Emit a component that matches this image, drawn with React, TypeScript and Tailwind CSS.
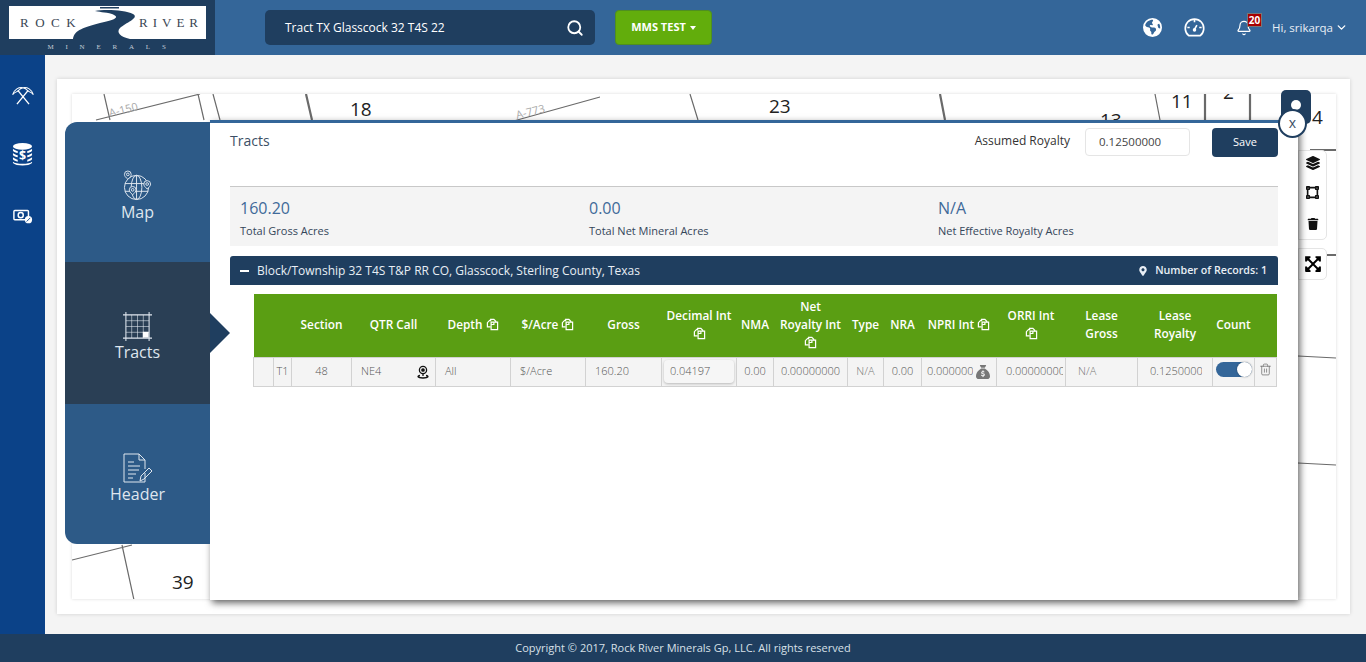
import { Bell, ChevronDown, Search, Trash2 } from "lucide-react";
import { FaExpandArrowsAlt, FaLayerGroup, FaMapMarkerAlt, FaTrash, FaVectorSquare } from "react-icons/fa";
import { FaEarthAmericas, FaSackDollar } from "react-icons/fa6";

const font = "font-['Open_Sans',sans-serif]";

const CopyIcon = () => (
  <svg viewBox="0 0 14 14" className="inline-block h-[13px] w-[13px] align-[-2px]" fill="none" stroke="currentColor" strokeWidth="1.3">
    <path d="M5 3.5V1.5h3.5l2 2v1M5 9.5H1.5V5L4 2.5H5" />
    <path d="M5.5 4.5H9l3.5 0V12.5H5.5Z" />
    <path d="M8.5 4.5v2.5H5.5" />
  </svg>
);

const Logo = () => (
  <div className="relative flex h-[55px] w-[215px] shrink-0 flex-col items-center bg-[#1f3e5f]">
    <div className="mt-[6px] flex h-[33px] w-[197px] items-center justify-between bg-white pl-[11px] pr-[3px] font-['Liberation_Serif',serif] text-[13px] tracking-[6.5px] text-[#3a4654]">
      <span>ROCK</span>
      <span className="tracking-[5px]">RIVER</span>
    </div>
    <svg viewBox="70 0 70 42" className="absolute left-[70px] top-0 h-[42px] w-[70px]" fill="#1f3e5f">
      <path d="M73 39C74 30 85 27 100 23 112 20 122 18 112 14 105 12 98 12 95 11 105 9 125 10 133 14 140 18 125 23 120 28 116 32 120 37 130 39Z" />
      <path d="M100 7h19v1.5h-19z" />
    </svg>
    <div className="mt-[3px] pl-[10px] font-['Liberation_Serif',serif] text-[7px] leading-[10px] tracking-[11.8px] text-[#c4ccd6]">MINERALS</div>
  </div>
);

const GaugeIcon = () => (
  <svg viewBox="0 0 22 22" className="ml-[22px] h-[21px] w-[21px]" fill="none" stroke="currentColor" strokeWidth="1.7">
    <path d="M5 19.5A9.7 9.7 0 1 1 17 19.5Z" />
    <path d="M11 3v2.5M3.5 11H6M18.5 11H16M11 13l2.5-4.5" />
    <circle cx="11" cy="13.5" r="1" fill="currentColor" />
  </svg>
);

const TopBar = () => (
  <header className="flex h-[55px] shrink-0 items-center bg-[#346699] shadow-[0_1px_3px_rgba(0,0,0,0.2)]">
    <Logo />
    <div className="ml-[50px] flex h-[35px] w-[330px] items-center justify-between rounded-[5px] bg-[#1f3e5f] pl-[20px] pr-[11px] text-[12px] text-white">
      <span>Tract TX Glasscock 32 T4S 22</span>
      <Search size={18} strokeWidth={2.4} />
    </div>
    <button className="ml-[20px] flex h-[35px] w-[97px] items-center justify-center rounded-[4px] border border-[#4f8f20] bg-[#62ad0c] text-[11px] font-bold text-white">
      MMS TEST
      <span className="ml-[4px] h-0 w-0 border-x-[3.5px] border-t-[4px] border-x-transparent border-t-white" />
    </button>
    <div className="ml-auto flex items-center text-white">
      <FaEarthAmericas size={19} />
      <GaugeIcon />
      <div className="relative ml-[31px]">
        <Bell size={16} strokeWidth={1.8} />
        <span className="absolute -right-[10px] -top-[7px] flex h-[14px] w-[15px] items-center justify-center border border-[#777] bg-[#a80000] text-[10px] font-bold leading-none">20</span>
      </div>
      <span className="ml-[20px] text-[11.5px] text-[#e8eef5]">Hi, srikarqa</span>
      <ChevronDown size={13} strokeWidth={2.5} className="ml-[2px] mr-[18px]" />
    </div>
  </header>
);

const Sidebar = () => (
  <aside className="flex w-[45px] shrink-0 flex-col items-center bg-[#0b4288] pt-[31px] text-white">
    <svg viewBox="0 0 26 22" className="h-[19px] w-[24px]" fill="none" stroke="currentColor" strokeWidth="1.6">
      <path d="M7 5 20 21M19 5 6 21" />
      <path d="M1 10C3 4 8 1 13 2 9 3 8 5 7 6L3 8ZM25 10C23 4 18 1 13 2 17 3 18 5 19 6L23 8Z" strokeWidth="1.2" />
    </svg>
    <svg viewBox="0 0 22 24" className="mt-[38px] h-[23px] w-[21px]" fill="currentColor">
      <ellipse cx="11" cy="3.5" rx="10" ry="3.5" />
      <path d="M1 6c1 1 3 2 5 2.400V10.500c-2-.3-4-1-5-2.500ZM21 6c-1 1-3 2-5 2.400V10.500c2-.3 4-1 5-2.500ZM1 10.500c1 1 3 2 5 2.400V15c-2-.3-4-1-5-2.500ZM21 10.500c-1 1-3 2-5 2.400V15c2-.3 4-1 5-2.500ZM1 15c1 1 3 2 5 2.400V19.500c-2-.3-4-1-5-2.500ZM21 15c-1 1-3 2-5 2.400V19.500c2-.3 4-1 5-2.500ZM1 19.500c3 3 17 3 20 0V21c-3 3.500-17 3.500-20 0Z" />
      <text x="11" y="17.500" textAnchor="middle" fontSize="13" fontWeight="700" fontFamily="Open Sans, sans-serif">$</text>
    </svg>
    <svg viewBox="0 0 22 16" className="mt-[43px] h-[15px] w-[20px]" fill="none" stroke="currentColor" strokeWidth="1.6">
      <rect x="1" y="1.500" width="16" height="10" rx="1" />
      <circle cx="8.500" cy="6.500" r="2.800" />
      <circle cx="17" cy="11.500" r="4" fill="currentColor" stroke="none" />
      <path d="M15 13.500l4-4" stroke="#0b4288" strokeWidth="1" />
    </svg>
  </aside>
);

const MapCanvas = () => (
  <svg viewBox="72 94 1264 505" className="absolute inset-0 h-full w-full bg-white" fill="none" stroke="#6a6a6a" strokeWidth="1.2">
    <path d="M96 120 200 94M104 94 110 120M198 94 204 120M213 94 220 120M510 122 600 97M690 94 698 120M1155 94 1160 120" />
    <path d="M306 94 312 120M940 94 945 120M1205 94V120M1250 94V120M1310 150H1336M1327 255H1336" strokeWidth="2.2" />
    <path d="M72 560 132 545M122 545 134 600M1298 356 1336 358M1298 463 1336 465" />
    <g fill="#222" stroke="none" fontFamily="Open Sans, sans-serif" fontSize="19">
      <text x="350" y="116">18</text>
      <text x="769" y="113">23</text>
      <text x="1171" y="108">11</text>
      <text x="1223" y="99">2</text>
      <text x="1100" y="127">13</text>
      <text x="1312" y="124">4</text>
      <text x="172" y="589">39</text>
    </g>
    <g fill="#aaa" stroke="none" fontFamily="Open Sans, sans-serif" fontSize="11">
      <text x="110" y="117" transform="rotate(-14 110 117)">A-150</text>
      <text x="517" y="119" transform="rotate(-14 517 119)">A-773</text>
    </g>
  </svg>
);

const MapTools = () => (
  <>
    <div className="absolute left-[1224px] top-[11px] flex h-[34px] w-[30px] justify-center rounded-[5px] bg-[#1f3e5f] pt-[10px]">
      <span className="h-[10px] w-[10px] rounded-full bg-white" />
    </div>
    <div className="absolute left-[1241px] top-[71px] h-[90px] w-[29px] rounded-r-[5px] border border-[#e5e5e5] bg-white">
      <div className="flex h-[23px] items-center justify-center text-[#111]"><FaLayerGroup size={14} /></div>
      <div className="flex h-[37px] items-center justify-center text-[#111]"><FaVectorSquare size={13} /></div>
      <div className="flex h-[26px] items-center justify-center text-[#111]"><FaTrash size={12} /></div>
    </div>
    <div className="absolute left-[1241px] top-[169px] flex h-[32px] w-[29px] items-center justify-center rounded-r-[5px] border border-[#e5e5e5] bg-white text-black">
      <FaExpandArrowsAlt size={18} />
    </div>
  </>
);

const SideTab = ({ label, active, icon, h }: { label: string; active?: boolean; icon: React.ReactNode; h: string }) => (
  <div className={`relative flex flex-col items-center justify-center pt-[9px] text-[#dfe6ee] ${h} ${active ? "bg-[#2a3f55]" : ""}`}>
    {icon}
    <span className="text-[16px] leading-[22px]">{label}</span>
    {active && (
      <span className="absolute -right-[20px] top-[51px] h-0 w-0 border-y-[20px] border-l-[20px] border-y-transparent border-l-[#1f3e5f]" />
    )}
  </div>
);

const Pin = ({ x, y }: { x: number; y: number }) => (
  <g transform={`translate(${x} ${y})`}>
    <path d="M0 4.500C-2.500 2.500-3.500 1-3.500-.5a3.500 3.500 0 0 1 7 0C3.500 1 2.500 2.500 0 4.500Z" fill="#2d5a87" />
    <circle cy="-.5" r="1.400" />
  </g>
);

const GlobeIcon = () => (
  <svg viewBox="0 0 30 32" className="h-[31px] w-[29px]" fill="none" stroke="currentColor" strokeWidth="1">
    <circle cx="14" cy="18" r="12.500" />
    <ellipse cx="14" cy="18" rx="5.500" ry="12.500" />
    <path d="M2 14h24M2 22h24M14 5.500V30" />
    <Pin x={5} y={5} />
    <Pin x={25} y={15} />
    <Pin x={10} y={21} />
  </svg>
);

const GridIcon = () => (
  <svg viewBox="0 0 30 30" className="h-[29px] w-[29px]" fill="none" stroke="currentColor" strokeWidth="0.6">
    <path d="M0 3h30M0 27h30M3 0v30M27 0v30" strokeWidth="1.1" />
    <path d="M9 3v24M15 3v24M21 3v24M3 9h24M3 15h24M3 21h24" />
    <rect x="20.500" y="20.500" width="6" height="6" fill="#fff" stroke="none" />
  </svg>
);

const HeaderIcon = () => (
  <svg viewBox="0 0 30 30" className="h-[30px] w-[30px]" fill="none" stroke="currentColor" strokeWidth="1">
    <path d="M22 20v9H1V1h15l6 6v9M16 1v6h6" />
    <path d="M5 9h6M5 13h12M5 17h11M5 21h8M5 25h5" />
    <path d="M17 28l1-5 8-8 3 3-8 8Z" />
  </svg>
);

const StatBox = ({ value, label, w }: { value: string; label: string; w: string }) => (
  <div className={w}>
    <div className="text-[16px] leading-[22px] text-[#3f6a99]">{value}</div>
    <div className="mt-[5px] text-[11px] leading-[14px] text-[#34465a]">{label}</div>
  </div>
);

const widths = [20, 18, 60, 84, 75, 75, 76, 75, 37, 74, 36, 38, 75, 69, 72, 75, 42, 22];

const Th = ({ children }: { children?: React.ReactNode }) => (
  <th className="px-0 pb-[2px] text-center align-middle text-[11.8px] font-semibold leading-[18px] text-white">
    {children}
  </th>
);

const Td = ({ children, cls = "" }: { children?: React.ReactNode; cls?: string }) => (
  <td className={`overflow-hidden whitespace-nowrap border border-[#d2d2d2] text-[11px] font-light text-[#555] ${cls}`}>{children}</td>
);

const TractTable = () => (
  <table className="ml-[43px] table-fixed border-collapse" style={{ width: 1023 }}>
    <colgroup>
      {widths.map((w, i) => (
        <col key={i} style={{ width: w }} />
      ))}
    </colgroup>
    <thead>
      <tr className="h-[63px] bg-[#5a9e13]">
        <Th />
        <Th />
        <Th>Section</Th>
        <Th>QTR Call</Th>
        <Th>Depth <CopyIcon /></Th>
        <Th>$/Acre <CopyIcon /></Th>
        <Th>Gross</Th>
        <Th>Decimal Int<br /><CopyIcon /></Th>
        <Th>NMA</Th>
        <Th>Net<br />Royalty Int<br /><CopyIcon /></Th>
        <Th>Type</Th>
        <Th>NRA</Th>
        <Th>NPRI Int <CopyIcon /></Th>
        <Th>ORRI Int<br /><CopyIcon /></Th>
        <Th>Lease<br />Gross</Th>
        <Th>Lease<br />Royalty</Th>
        <Th>Count</Th>
        <Th />
      </tr>
    </thead>
    <tbody>
      <tr className="h-[29px] bg-[#f4f4f4]">
        <Td />
        <Td cls="text-center">T1</Td>
        <Td cls="text-center">48</Td>
        <Td cls="pl-[9px]">
          <div className="flex items-center justify-between pr-[5px]">
            NE4
            <svg viewBox="0 0 14 14" className="h-[14px] w-[14px]" fill="none" stroke="#111" strokeWidth="1.3">
              <circle cx="7" cy="5" r="3.600" />
              <circle cx="7" cy="5" r="1.200" fill="#111" />
              <path d="M7 9v2M4 10.500C1 11 1 13 7 13s6-2 3-2.500" />
            </svg>
          </div>
        </Td>
        <Td cls="pl-[9px]">All</Td>
        <Td cls="pl-[9px] text-[#8a8a8a]">$/Acre</Td>
        <Td cls="pl-[9px]">160.20</Td>
        <Td cls="px-[2px]">
          <div className="flex h-[23px] items-center rounded-[4px] bg-[#f6f6f6] pl-[6px] shadow-[0_1px_3px_rgba(0,0,0,0.25)]">0.04197</div>
        </Td>
        <Td cls="text-center">0.00</Td>
        <Td cls="text-center">0.00000000</Td>
        <Td cls="text-center text-[#777]">N/A</Td>
        <Td cls="text-center">0.00</Td>
        <Td cls="pl-[5px]">
          <div className="flex items-center">
            <span className="w-[46px] overflow-hidden">0.00000000</span>
            <FaSackDollar size={14} className="ml-[3px] text-[#777]" />
          </div>
        </Td>
        <Td cls="pl-[9px]">
          <span className="block w-[57px] overflow-hidden">0.00000000</span>
        </Td>
        <Td cls="pl-[12px] text-[#777]">N/A</Td>
        <Td cls="pl-[12px]">
          <span className="block w-[52px] overflow-hidden">0.12500000</span>
        </Td>
        <Td cls="pl-[3px]">
          <div className="relative mb-[4px] h-[15px] w-[36px] rounded-full bg-[#346699]">
            <span className="absolute right-0 top-0 h-[15px] w-[15px] rounded-full bg-white shadow-[0_0_2px_rgba(0,0,0,0.4)]" />
          </div>
        </Td>
        <Td cls="text-center">
          <Trash2 size={13} strokeWidth={1.3} className="mx-auto mb-[4px] text-[#666]" />
        </Td>
      </tr>
    </tbody>
  </table>
);

const Modal = () => (
  <>
    <div className="absolute left-[8px] top-[43px] z-[11] h-[422px] w-[145px] overflow-visible rounded-l-[12px] bg-[#2d5a87]">
      <SideTab label="Map" h="h-[140px]" icon={<GlobeIcon />} />
      <SideTab label="Tracts" h="h-[142px]" active icon={<GridIcon />} />
      <SideTab label="Header" h="h-[140px]" icon={<HeaderIcon />} />
    </div>
    <div className="absolute left-[153px] top-[41px] z-10 h-[480px] w-[1088px] border-t-[3px] border-[#346699] bg-white shadow-[2px_3px_7px_rgba(0,0,0,0.6)]">
      <div className="flex h-[63px] items-start px-[20px]">
        <span className="mt-[8px] text-[14px] leading-[20px] text-[#3c4f66]">Tracts</span>
        <span className="ml-auto mt-[9px] text-[12px] leading-[18px] text-[#333]">Assumed Royalty</span>
        <div className="ml-[15px] mt-[5px] flex h-[28px] w-[105px] items-center rounded-[4px] border border-[#e5e5e5] pl-[13px] text-[11.5px] text-[#444]">0.12500000</div>
        <button className="ml-[22px] mt-[5px] h-[29px] w-[66px] rounded-[4px] bg-[#1f3e5f] text-[11px] text-white">Save</button>
      </div>
      <div className="mx-[20px] flex h-[60px] border-t border-[#c8c8c8] bg-[#f4f4f4] pl-[10px] pt-[10px]">
        <StatBox value="160.20" label="Total Gross Acres" w="w-[349px]" />
        <StatBox value="0.00" label="Total Net Mineral Acres" w="w-[349px]" />
        <StatBox value="N/A" label="Net Effective Royalty Acres" w="w-[300px]" />
      </div>
      <div className="mx-[20px] mt-[10px] flex h-[29px] items-center rounded-t-[3px] bg-[#1f3e5f] pl-[10px] pr-[11px] text-[12px] text-[#e8eef5]">
        <span className="mr-[8px] h-[2px] w-[9px] bg-white" />
        Block/Township 32 T4S T&amp;P RR CO, Glasscock, Sterling County, Texas
        <FaMapMarkerAlt size={10} className="ml-auto mr-[7px]" />
        <span className="text-[10.7px] font-semibold">Number of Records: 1</span>
      </div>
      <div className="mt-[9px]">
        <TractTable />
      </div>
    </div>
    <div className="absolute left-[1221px] top-[30px] z-20 flex h-[29px] w-[29px] items-center justify-center rounded-full border-2 border-[#1f3e5f] bg-white pb-[2px] text-[14px] text-[#3c4f66]">x</div>
  </>
);

export default function App() {
  return (
    <div className={`flex h-screen flex-col overflow-hidden ${font}`}>
      <TopBar />
      <div className="flex min-h-0 flex-1">
        <Sidebar />
        <main className="flex-1 bg-[#f4f4f4] pl-[12px] pr-[16px] pt-[24px]">
          <div className="relative h-[535px] bg-white shadow-[0_0_4px_rgba(0,0,0,0.15)]">
            <div className="absolute bottom-[15px] left-[15px] right-[14px] top-[15px] shadow-[0_0_3px_rgba(0,0,0,0.15)]">
              <MapCanvas />
            </div>
            <MapTools />
            <Modal />
          </div>
        </main>
      </div>
      <footer className="flex h-[28px] shrink-0 items-center justify-center bg-[#1f3e5f] text-[11px] text-[#d8e0e8]">
        Copyright © 2017, Rock River Minerals Gp, LLC. All rights reserved
      </footer>
    </div>
  );
}
